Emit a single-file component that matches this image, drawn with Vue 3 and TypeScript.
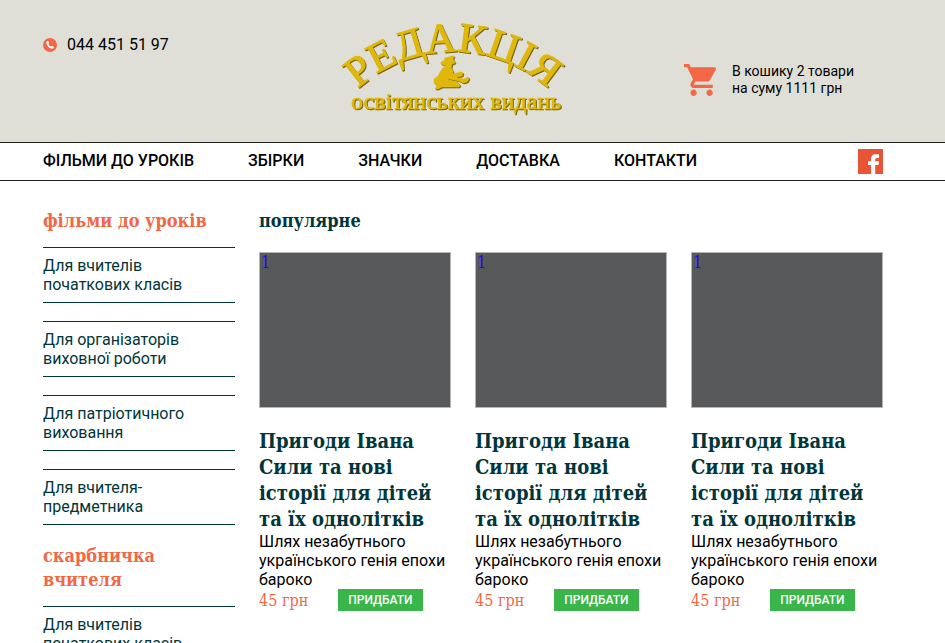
<script setup lang="ts">
interface Section {
  title: string
  items: string[]
}

interface Product {
  id: number
  image: string
  title: string
  text: string
  price: string
}

const menu: string[] = ['Фільми до уроків', 'Збірки', 'Значки', 'Доставка', 'Контакти']

const groups: string[] = [
  'Для вчителів початкових класів',
  'Для організаторів виховної роботи',
  'Для патріотичного виховання',
  'Для вчителя-предметника',
]

const sections: Section[] = [
  { title: 'фільми до уроків', items: groups },
  { title: 'скарбничка вчителя', items: groups.slice(0, 1) },
]

const products: Product[] = [1, 2, 3].map((id) => ({
  id,
  image: '1',
  title: 'Пригоди Івана Сили та нові історії для дітей та їх однолітків',
  text: 'Шлях незабутнього українського генія епохи бароко',
  price: '45 грн',
}))
</script>

<template>
  <div class="page">
    <header class="header">
      <a class="phone" href="tel:0444515197">
        <svg class="phone-icon" viewBox="0 0 14 14" aria-hidden="true">
          <circle cx="7" cy="7" r="7" fill="#f26745" />
          <path
            d="M3.4 3.9 4.6 2.9Q5 2.7 5.2 3.1L6 4.7Q6.1 5 5.9 5.3L5.3 5.9Q6 7.5 8 8.6L8.7 8Q9 7.8 9.3 8L10.8 8.9Q11.1 9.2 10.9 9.5L10.1 10.6Q9.6 11 8.8 10.8 4.5 9.5 3.2 5Q3.1 4.3 3.4 3.9Z"
            fill="#fff"
          />
        </svg>
        <span>044 451 51 97</span>
      </a>

      <a class="logo" href="#">
        <svg class="logo-art" viewBox="0 0 228 96">
          <defs>
            <path id="logo-arc" d="M-4 94A141 141 0 0 1 230 94" />
          </defs>
          <g class="gold">
            <text class="logo-top" text-anchor="middle">
              <textPath href="#logo-arc" startOffset="50%">РЕДАКЦІЯ</textPath>
            </text>
            <path
              d="M101 42 104 41 105 38 109 37 112 36 114 36 113 39 115 43 112 44 111 48 113 51 113 54 121 52 123 53 122 56 117 57 117 58 124 59 128 57 129 59 127 62 123 63 119 61 109 59 108 60 117 62 120 65 119 67 102 67 98 69 95 69 97 66 94 63 94 59 98 56 100 52 103 48 106 46 101 44Z"
            />
            <text class="logo-bottom" x="116" y="89" text-anchor="middle">освітянських видань</text>
          </g>
        </svg>
      </a>

      <a class="cart" href="#">
        <svg class="cart-icon" viewBox="1 2 20 20" aria-hidden="true">
          <path
            d="M7 18c-1.1 0-1.99.9-1.99 2S5.9 22 7 22s2-.9 2-2-.9-2-2-2zM1 2v2h2l3.6 7.59-1.35 2.45c-.16.28-.25.61-.25.96 0 1.1.9 2 2 2h12v-2H7.42c-.14 0-.25-.11-.25-.25l.03-.12.9-1.63h7.45c.75 0 1.41-.41 1.75-1.03l3.58-6.49A1 1 0 0 0 20 4H5.21l-.94-2H1zm16 16c-1.1 0-1.99.9-1.99 2s.89 2 1.99 2 2-.9 2-2-.9-2-2-2z"
            fill="#f26745"
          />
        </svg>
        <span>В кошику 2 товари<br />на суму 1111 грн</span>
      </a>
    </header>

    <nav class="nav">
      <ul class="menu">
        <li v-for="item in menu" :key="item"><a href="#">{{ item }}</a></li>
      </ul>
      <a class="facebook" href="#" aria-label="Facebook">
        <svg viewBox="0 0 25 25" aria-hidden="true">
          <path fill="#e95336" d="M0 0H25V25H0Z" />
          <path
            fill="#fff"
            d="M13 25V16H10V12.3H13V10Q13 5.3 17.5 5.3H21V9H18.7Q17.2 9 17.2 10.5V12.3H21L20.5 16H17.2V25Z"
          />
        </svg>
      </a>
    </nav>

    <div class="content">
      <aside class="sidebar">
        <section v-for="section in sections" :key="section.title" class="group">
          <h2 class="heading accent">{{ section.title }}</h2>
          <ul class="links">
            <li v-for="item in section.items" :key="item">
              <a href="#">{{ item }}</a>
            </li>
          </ul>
        </section>
      </aside>

      <main class="main">
        <h2 class="heading">популярне</h2>
        <div class="products">
          <article v-for="product in products" :key="product.id">
            <a class="cover" href="#">{{ product.image }}</a>
            <h3 class="title">{{ product.title }}</h3>
            <p>{{ product.text }}</p>
            <div class="buy">
              <span class="price">{{ product.price }}</span>
              <button type="button" class="button">Придбати</button>
            </div>
          </article>
        </div>
      </main>
    </div>
  </div>
</template>

<style>
body {
  margin: 0;
  background: #fff;
}
</style>

<style scoped>
.page {
  font-family: Roboto, "Liberation Sans", sans-serif;
  font-size: 16px;
  line-height: 19px;
  color: #000;
}

a {
  color: inherit;
  text-decoration: none;
}

ul,
h2,
h3,
p {
  margin: 0;
  padding: 0;
  list-style: none;
}

.header {
  display: grid;
  grid-template-columns: 1fr auto 1fr;
  align-items: start;
  padding: 20px 62px 26px 43px;
  background: #dfdfd7;
}

.phone {
  display: flex;
  align-items: center;
  gap: 10px;
  padding-top: 15px;
}

.phone-icon {
  width: 14px;
  height: 14px;
}

.logo-art {
  display: block;
  width: 228px;
  height: 96px;
  overflow: visible;
}

.logo {
  margin-right: 18px;
}

.gold {
  fill: #dfb80b;
  stroke: #dfb80b;
  stroke-width: 0.6px;
  filter: drop-shadow(1px 1px 0 #75630f);
}

.logo-top {
  font: 42px "Liberation Serif", serif;
  stroke-width: 1px;
}

.logo-bottom {
  font: 24px "Liberation Serif", serif;
}

.cart {
  display: flex;
  justify-self: end;
  align-items: center;
  gap: 16px;
  padding: 43px 29px 0 0;
  font-size: 14px;
  line-height: 17px;
  white-space: nowrap;
}

.cart-icon {
  width: 32px;
  height: 32px;
}

.nav {
  display: flex;
  align-items: center;
  justify-content: space-between;
  padding: 6px 62px 6px 43px;
  border-top: 1px solid #231f20;
  border-bottom: 1px solid #231f20;
}

.menu {
  display: flex;
  gap: 54px;
  padding-bottom: 2px;
  font-weight: 500;
  text-transform: uppercase;
  white-space: nowrap;
}

.facebook,
.facebook svg {
  display: block;
  width: 25px;
  height: 25px;
}

.content {
  display: grid;
  grid-template-columns: repeat(4, minmax(0, 1fr));
  gap: 24px;
  padding: 28px 62px 0 43px;
}

.main {
  grid-column: span 3;
}

.heading,
.title,
.price,
.cover {
  font-family: "Roboto Slab", "DejaVu Serif Condensed", "DejaVu Serif", serif;
}

.heading {
  font-size: 18px;
  line-height: 24px;
  color: #00363a;
}

.accent {
  margin-bottom: 14px;
  color: #f26745;
}

.group + .group {
  margin-top: 19px;
}

.links {
  display: grid;
  gap: 18px;
  color: #00363a;
}

.links li {
  padding: 8px 0;
  border-top: 1px solid #00363a;
  border-bottom: 1px solid #00363a;
}

.links a {
  display: block;
  max-width: 160px;
}

.products {
  display: grid;
  grid-template-columns: repeat(3, minmax(0, 1fr));
  gap: 24px;
  margin-top: 19px;
}

.cover {
  display: block;
  box-sizing: border-box;
  height: 156px;
  padding: 0 1px;
  border: 1px solid #b5b5b5;
  background: #58595b;
  color: #20f;
}

.title {
  margin-top: 20px;
  font-size: 20px;
  line-height: 26px;
  color: #00363a;
}

.buy {
  display: flex;
  align-items: center;
  gap: 30px;
}

.price {
  color: #f26745;
}

.button {
  height: 22px;
  padding: 0 10px;
  border: 0;
  background: #39b54a;
  color: #fff;
  font: 500 12px/22px Roboto, "Liberation Sans", sans-serif;
  text-transform: uppercase;
}
</style>
